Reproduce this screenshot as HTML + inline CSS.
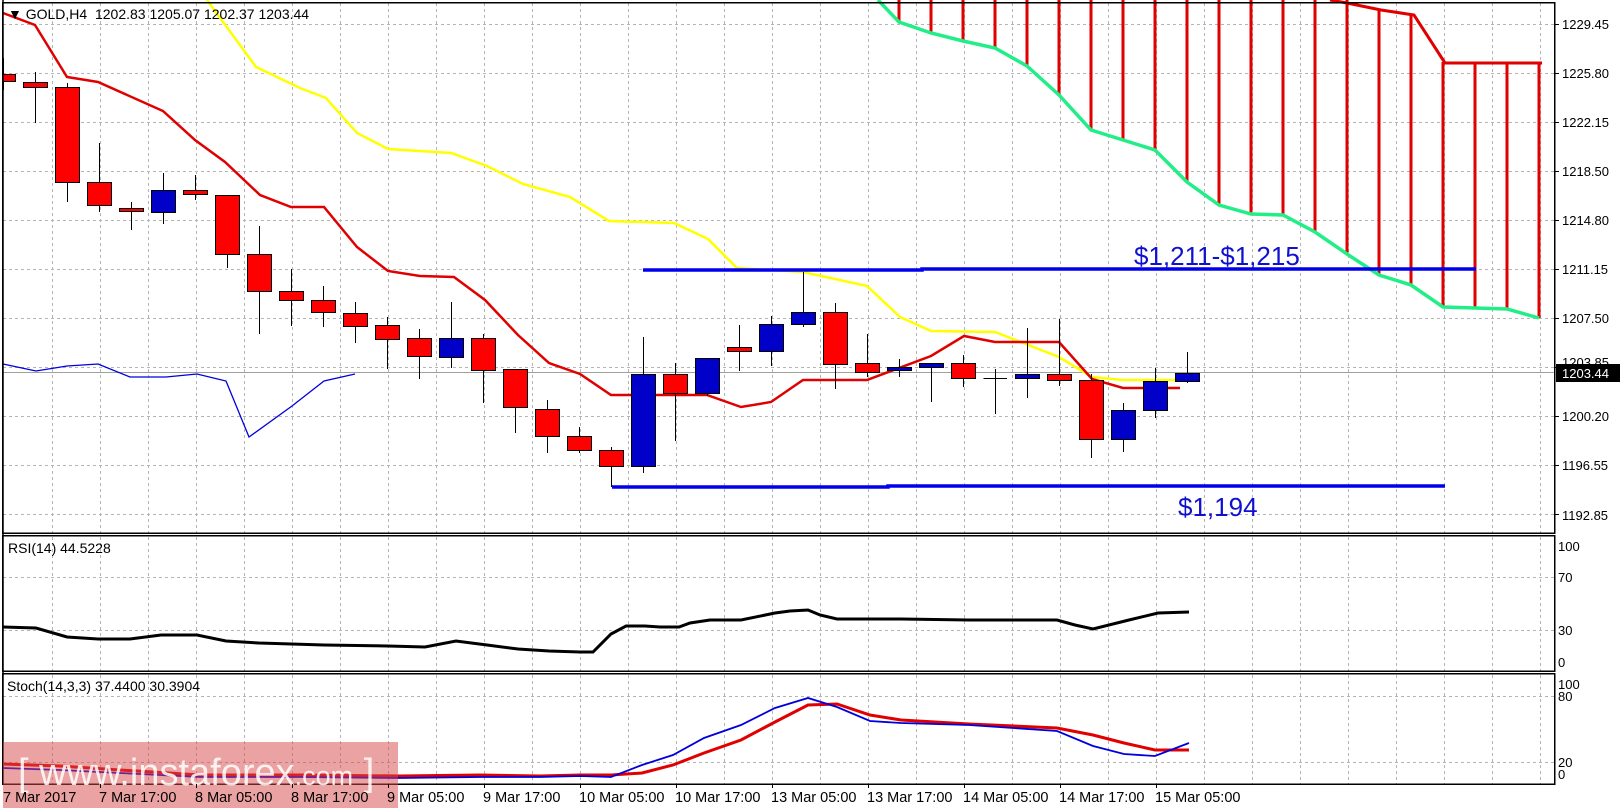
<!DOCTYPE html>
<html><head><meta charset="utf-8"><style>
html,body{margin:0;padding:0;background:#fff;width:1622px;height:811px;overflow:hidden}
svg{display:block;font-family:"Liberation Sans",sans-serif}
</style></head><body>
<svg width="1622" height="811" viewBox="0 0 1622 811" xmlns="http://www.w3.org/2000/svg">
<rect width="1622" height="811" fill="#fff"/>
<!-- grids -->
<g stroke="#b4b4b4" stroke-width="1" stroke-dasharray="3,3" shape-rendering="crispEdges">
<path d="M52.5 3V784M100.5 3V784M148.5 3V784M196.5 3V784M244.5 3V784M292.5 3V784M340.5 3V784M388.5 3V784M436.5 3V784M484.5 3V784M532.5 3V784M580.5 3V784M628.5 3V784M676.5 3V784M724.5 3V784M772.5 3V784M820.5 3V784M868.5 3V784M916.5 3V784M964.5 3V784M1012.5 3V784M1060.5 3V784M1108.5 3V784M1156.5 3V784M1204.5 3V784M1252.5 3V784M1300.5 3V784M1348.5 3V784M1396.5 3V784M1444.5 3V784M1492.5 3V784M1540.5 3V784"/>
<path d="M3 24.5H1555M3 73.5H1555M3 122.5H1555M3 171.5H1555M3 220.5H1555M3 269.5H1555M3 318.5H1555M3 367.5H1555M3 416.5H1555M3 465.5H1555M3 514.5H1555"/>
<path d="M3 577.5H1555M3 630.5H1555M3 696.5H1555M3 762.5H1555"/>
</g>
<line x1="3" y1="372.5" x2="1555" y2="372.5" stroke="#a0a0a0" stroke-width="1"/>
<!-- cloud hatch -->
<g stroke="#e00000" stroke-width="3">
<path d="M899 0V22M931 0V33M963 0V41M995 0V48M1027 0V66M1059 0V95M1091 0V130M1123 0V140M1155 0V150M1187 0V182M1219 0V205M1251 0V214M1283 0V215M1315 0V232M1347 0V254M1379 10V275M1411 15V285M1443 62V307M1475 63V308M1507 63V309M1539 63V318"/>
</g>
<polyline fill="none" stroke="#e00000" stroke-width="3" points="1330,0 1347,3 1381,10 1414,15 1445,63 1542,63"/>
<polyline fill="none" stroke="#22ee88" stroke-width="3.5" points="878,0 899,22 931,33 963,41 995,48 1027,66 1059,95 1091,130 1123,140 1155,150 1187,182 1219,205 1251,214 1283,215 1315,232 1347,254 1379,275 1411,285 1443,307 1475,308 1507,309 1539,318"/>
<polyline fill="none" stroke="#ffff00" stroke-width="2.5" points="207,0 256,67 300,88 326,98 357,133 388,149 451,153 487,166 523,184 570,197 609,221 674,223 708,239 737,268 803,272 867,286 900,317 931,331 995,332 1059,357 1092,377 1123,380 1180,380"/>
<polyline fill="none" stroke="#e00000" stroke-width="2.5" points="3,13 35,25 67,77 98,82 163,111 195,140 225,162 260,195 291,207 324,207 357,247 388,271 420,276 454,277 485,300 518,335 549,363 580,374 611,395 707,395 741,407 771,402 803,380 867,380 931,356 964,336 995,342 1059,342 1092,379 1123,388 1180,388"/>
<polyline fill="none" stroke="#0000dd" stroke-width="1.3" points="3,364 36,371 67,366 98,364 130,377 166,377 197,374 226,381 249,437 292,406 324,381 355,374"/>
<!-- support/resistance -->
<path d="M643 270H922V269H1476" stroke="#0000ee" stroke-width="3.5" fill="none"/>
<path d="M612 487H888V486H1445" stroke="#0000ee" stroke-width="3.5" fill="none"/>
<text x="1134" y="265" font-size="26" fill="#1010d0">$1,211-$1,215</text>
<text x="1178" y="516" font-size="26" fill="#1010d0">$1,194</text>
<!-- candles -->
<g stroke="#000" stroke-width="1" shape-rendering="crispEdges">
<path d="M3.5 58V90M35.5 72V123M67.5 83V202M99.5 143V212M131.5 202V230M163.5 173V224M195.5 175V200M227.5 195V268M259.5 226V334M291.5 269V326M323.5 286V327M355.5 302V343M387.5 317V369M419.5 329V379M451.5 302V368M483.5 334V403M515.5 369V433M547.5 400V453M579.5 427V453M611.5 447V487M643.5 337V473M675.5 363V441M707.5 358V396M739.5 325V371M771.5 316V366M803.5 272V327M835.5 303V389M867.5 334V377M899.5 359V377M931.5 363V402M963.5 355V387M995.5 369V414M1027.5 328V398M1059.5 319V386M1091.5 374V458M1123.5 403V452M1155.5 368V418M1187.5 352V383M983.5 378.5H1007"/>
<g fill="#ff0000">
<rect x="-8.5" y="74.5" width="24" height="7"/><rect x="23.5" y="82.5" width="24" height="5"/><rect x="55.5" y="87.5" width="24" height="95"/><rect x="87.5" y="182.5" width="24" height="23"/><rect x="119.5" y="208.5" width="24" height="3"/><rect x="183.5" y="190.5" width="24" height="4"/><rect x="215.5" y="195.5" width="24" height="59"/><rect x="247.5" y="254.5" width="24" height="37"/><rect x="279.5" y="291.5" width="24" height="9"/><rect x="311.5" y="300.5" width="24" height="12"/><rect x="343.5" y="313.5" width="24" height="13"/><rect x="375.5" y="325.5" width="24" height="14"/><rect x="407.5" y="338.5" width="24" height="18"/><rect x="471.5" y="338.5" width="24" height="32"/><rect x="503.5" y="369.5" width="24" height="38"/><rect x="535.5" y="409.5" width="24" height="27"/><rect x="567.5" y="436.5" width="24" height="14"/><rect x="599.5" y="450.5" width="24" height="16"/><rect x="663.5" y="374.5" width="24" height="19"/><rect x="727.5" y="347.5" width="24" height="4"/><rect x="823.5" y="312.5" width="24" height="52"/><rect x="855.5" y="363.5" width="24" height="9"/><rect x="951.5" y="363.5" width="24" height="15"/><rect x="1047.5" y="374.5" width="24" height="6"/><rect x="1079.5" y="380.5" width="24" height="59"/>
</g>
<g fill="#0000c8">
<rect x="151.5" y="190.5" width="24" height="22"/><rect x="439.5" y="338.5" width="24" height="19"/><rect x="631.5" y="374.5" width="24" height="92"/><rect x="695.5" y="358.5" width="24" height="35"/><rect x="759.5" y="324.5" width="24" height="27"/><rect x="791.5" y="312.5" width="24" height="12"/><rect x="887.5" y="367.5" width="24" height="3"/><rect x="919.5" y="363.5" width="24" height="4"/><rect x="1015.5" y="374.5" width="24" height="4"/><rect x="1111.5" y="410.5" width="24" height="29"/><rect x="1143.5" y="381.5" width="24" height="29"/><rect x="1175.5" y="373.5" width="24" height="8"/>
</g>
</g>
<g fill="none" stroke="#000" stroke-width="1.5" shape-rendering="crispEdges">
<rect x="2.5" y="2.5" width="1552" height="530.5"/>
<rect x="2.5" y="535.5" width="1552" height="135.5"/>
<rect x="2.5" y="673.5" width="1552" height="110.5"/>
</g>
<rect x="0" y="0" width="2" height="811" fill="#fff"/>
<line x1="3" y1="0" x2="3" y2="784" stroke="#000" stroke-width="1.5"/>
<!-- RSI -->
<polyline fill="none" stroke="#000" stroke-width="3" points="3,627 36,628 67,637 98,639 130,639 161,635 197,635 226,641 259,643 324,645 388,646 425,647 456,641 487,645 518,649 549,651 580,652 593,652 611,634 626,626 645,626 660,627 679,627 690,623 710,620 741,620 775,613 790,611 808,610 820,615 837,619 901,619 969,620 1057,620 1075,625 1093,629 1129,620 1158,613 1189,612"/>
<!-- Stoch -->
<polyline fill="none" stroke="#e00000" stroke-width="3" points="3,764 60,766 120,770 200,775 300,775 400,776 480,775 540,776 580,775 611,775 642,773 673,765 704,753 741,740 775,722 808,705 837,704 870,715 901,720 969,724 1057,728 1093,735 1124,743 1155,750 1189,750"/>
<polyline fill="none" stroke="#0000dd" stroke-width="1.8" points="3,768 60,770 120,773 200,777 300,777 400,778 480,777 540,777 580,776 611,777 642,765 673,755 704,738 741,725 775,708 808,698 837,707 870,721 901,723 969,725 1057,731 1093,746 1124,754 1155,756 1189,743"/>
<!-- watermark -->
<rect x="3" y="742" width="395" height="66" fill="rgba(215,70,70,0.5)"/>
<text x="18" y="785" font-size="38" fill="#fff" fill-opacity="0.85">[ www.instaforex<tspan font-size="27">.com</tspan> ]</text>
<!-- labels -->
<text x="8" y="19" font-size="14" fill="#000">▼ GOLD,H4&#160; 1202.83 1205.07 1202.37 1203.44</text>
<text x="8" y="553" font-size="14" fill="#000">RSI(14) 44.5228</text>
<text x="7" y="691" font-size="14" fill="#000">Stoch(14,3,3) 37.4400 30.3904</text>
<g stroke="#000" stroke-width="1" shape-rendering="crispEdges">
<path d="M1555 24.5h4M1555 73.5h4M1555 122.5h4M1555 171.5h4M1555 220.5h4M1555 269.5h4M1555 318.5h4M1555 367.5h4M1555 416.5h4M1555 465.5h4M1555 514.5h4"/>
<path d="M100.5 784v4M196.5 784v4M292.5 784v4M388.5 784v4M484.5 784v4M580.5 784v4M676.5 784v4M772.5 784v4M868.5 784v4M964.5 784v4M1060.5 784v4M1156.5 784v4"/>
</g>
<g font-size="13" fill="#000">
<text x="1562" y="29">1229.45</text><text x="1562" y="78">1225.80</text><text x="1562" y="127">1222.15</text><text x="1562" y="176">1218.50</text><text x="1562" y="225">1214.80</text><text x="1562" y="274">1211.15</text><text x="1562" y="323">1207.50</text><text x="1562" y="367">1203.85</text><text x="1562" y="421">1200.20</text><text x="1562" y="470">1196.55</text><text x="1562" y="520">1192.85</text>
<text x="1558" y="551">100</text><text x="1558" y="582">70</text><text x="1558" y="635">30</text><text x="1558" y="667">0</text>
<text x="1558" y="689">100</text><text x="1558" y="701">80</text><text x="1558" y="767">20</text><text x="1558" y="779">0</text>
</g>
<rect x="1556" y="364" width="64" height="18" fill="#000"/>
<text x="1562" y="378" font-size="13" fill="#fff">1203.44</text>
<g font-size="14.5" fill="#000">
<text x="3" y="802">7 Mar 2017</text><text x="99" y="802">7 Mar 17:00</text><text x="195" y="802">8 Mar 05:00</text><text x="291" y="802">8 Mar 17:00</text><text x="387" y="802">9 Mar 05:00</text><text x="483" y="802">9 Mar 17:00</text><text x="579" y="802">10 Mar 05:00</text><text x="675" y="802">10 Mar 17:00</text><text x="771" y="802">13 Mar 05:00</text><text x="867" y="802">13 Mar 17:00</text><text x="963" y="802">14 Mar 05:00</text><text x="1059" y="802">14 Mar 17:00</text><text x="1155" y="802">15 Mar 05:00</text>
</g>
</svg>
</body></html>
